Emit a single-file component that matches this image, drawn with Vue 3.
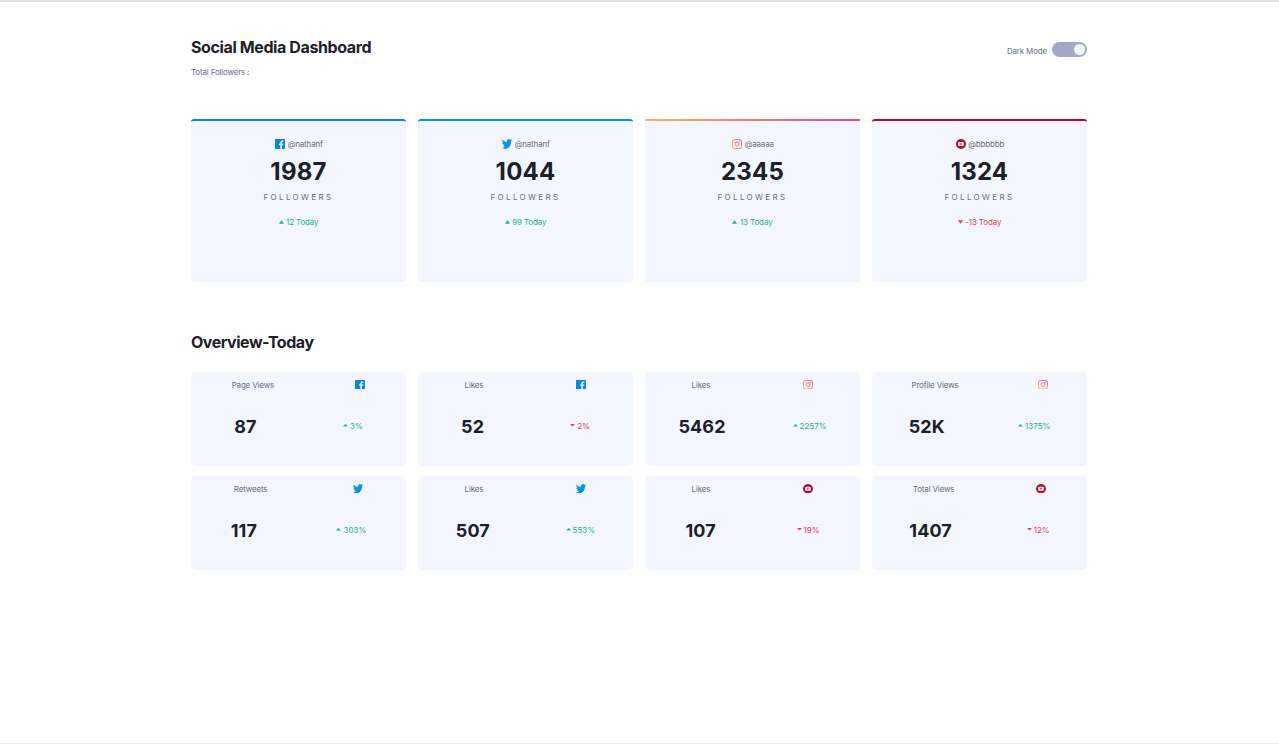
<script setup>
const followers = [
  { net: 'facebook', handle: '@nathanf', count: '1987', up: true, delta: '12 Today' },
  { net: 'twitter', handle: '@nathanf', count: '1044', up: true, delta: '99 Today' },
  { net: 'instagram', handle: '@aaaaa', count: '2345', up: true, delta: '13 Today' },
  { net: 'youtube', handle: '@bbbbbb', count: '1324', up: false, delta: '-13 Today' },
]
const overview = [
  { label: 'Page Views', net: 'facebook', value: '87', up: true, pct: '3%' },
  { label: 'Likes', net: 'facebook', value: '52', up: false, pct: '2%' },
  { label: 'Likes', net: 'instagram', value: '5462', up: true, pct: '2257%' },
  { label: 'Profile Views', net: 'instagram', value: '52K', up: true, pct: '1375%' },
  { label: 'Retweets', net: 'twitter', value: '117', up: true, pct: '303%' },
  { label: 'Likes', net: 'twitter', value: '507', up: true, pct: '553%' },
  { label: 'Likes', net: 'youtube', value: '107', up: false, pct: '19%' },
  { label: 'Total Views', net: 'youtube', value: '1407', up: false, pct: '12%' },
]
</script>

<template>
  <div class="page">
    <svg class="defs" width="0" height="0" aria-hidden="true">
      <defs>
        <linearGradient id="ig" x1="0" y1="1" x2="1" y2="0">
          <stop offset="0" stop-color="#fdb768" />
          <stop offset="0.5" stop-color="#f2756e" />
          <stop offset="1" stop-color="#df4996" />
        </linearGradient>
        <symbol id="facebook" viewBox="0 0 20 20" preserveAspectRatio="none">
          <path fill="#0388f0" d="M18.896 0H1.104C.494 0 0 .494 0 1.104v17.793C0 19.506.494 20 1.104 20h9.58v-7.745H8.076V9.237h2.606V7.01c0-2.583 1.578-3.99 3.883-3.99 1.104 0 2.052.082 2.329.119v2.7h-1.598c-1.254 0-1.496.597-1.496 1.47v1.928h2.989l-.39 3.018h-2.6V20h5.098c.608 0 1.102-.494 1.102-1.104V1.104C20 .494 19.506 0 18.896 0z" />
        </symbol>
        <symbol id="twitter" viewBox="0 2 24 20" preserveAspectRatio="none">
          <path fill="#0096ee" d="M23.953 4.57a10 10 0 01-2.825.775 4.958 4.958 0 002.163-2.723c-.951.555-2.005.959-3.127 1.184a4.92 4.92 0 00-8.384 4.482C7.69 8.095 4.067 6.13 1.64 3.162a4.822 4.822 0 00-.666 2.475c0 1.71.87 3.213 2.188 4.096a4.904 4.904 0 01-2.228-.616v.06a4.923 4.923 0 003.946 4.827 4.996 4.996 0 01-2.212.085 4.936 4.936 0 004.604 3.417 9.867 9.867 0 01-6.102 2.105c-.39 0-.779-.023-1.17-.067a13.995 13.995 0 007.557 2.209c9.053 0 13.998-7.496 13.998-13.985 0-.21 0-.42-.015-.63A9.935 9.935 0 0024 4.59z" />
        </symbol>
        <symbol id="instagram" viewBox="0 0 20 20" preserveAspectRatio="none">
          <rect x="0.9" y="0.9" width="18.2" height="18.2" rx="5" fill="none" stroke="url(#ig)" stroke-width="1.8" />
          <circle cx="10" cy="10" r="4.2" fill="none" stroke="url(#ig)" stroke-width="2" />
          <circle cx="15.3" cy="4.7" r="1.2" fill="#e2528f" />
        </symbol>
        <symbol id="youtube" viewBox="0 0 20 20" preserveAspectRatio="none">
          <circle cx="10" cy="10" r="10" fill="#c4032a" />
          <rect x="4.3" y="5.8" width="11.4" height="8.4" rx="2" fill="#f3f6ff" />
          <path fill="#c4032a" d="M8.6 7.8v4.4l3.8-2.2z" />
        </symbol>
      </defs>
    </svg>

    <main class="content">
      <header class="header">
        <div>
          <h1 class="title">Social Media Dashboard</h1>
          <p class="total">Total Followers :</p>
        </div>
        <div class="mode">
          <span class="mode-label">Dark Mode</span>
          <span class="switch"><span class="knob"></span></span>
        </div>
      </header>

      <section class="cards">
        <article v-for="f in followers" :key="f.net" class="card" :class="f.net">
          <div class="account">
            <svg class="icon"><use :href="'#' + f.net" /></svg>
            <span>{{ f.handle }}</span>
          </div>
          <div class="count">{{ f.count }}</div>
          <div class="caption">FOLLOWERS</div>
          <div class="delta" :class="{ down: !f.up }">
            <svg class="arrow" viewBox="0 0 6 4"><path d="M0 4L3 0L6 4z" /></svg>
            <span>{{ f.delta }}</span>
          </div>
        </article>
      </section>

      <h2 class="title overview-title">Overview-Today</h2>

      <section class="tiles">
        <article v-for="(o, i) in overview" :key="i" class="tile">
          <div class="row head">
            <span class="label">{{ o.label }}</span>
            <svg class="icon"><use :href="'#' + o.net" /></svg>
          </div>
          <div class="row">
            <span class="value">{{ o.value }}</span>
            <span class="pct" :class="{ down: !o.up }">
              <svg class="arrow" viewBox="0 0 6 3" preserveAspectRatio="none"><path d="M0 3L3 0L6 3z" /></svg>
              <span>{{ o.pct }}</span>
            </span>
          </div>
        </article>
      </section>
    </main>
  </div>
</template>

<style>
body {
  background: #fff;
}
</style>

<style scoped>
.page {
  box-sizing: border-box;
  height: 744px;
  border-top: 2px solid #e2e2e2;
  border-bottom: 1px solid #ececec;
  font-family: Inter, "Liberation Sans", sans-serif;
  font-size: 8px;
  line-height: 10px;
  letter-spacing: -0.17px;
  color: #696e84;
}
.defs {
  position: absolute;
}
.content {
  width: 896px;
  margin-left: 191px;
  padding-top: 35px;
}
.header {
  display: flex;
  justify-content: space-between;
  height: 82px;
}
.title {
  margin: 0;
  font-size: 16px;
  line-height: 20px;
  font-weight: 700;
  letter-spacing: -0.39px;
  color: #1d2029;
}
.total {
  margin: 10px 0 0;
}
.mode {
  display: flex;
  align-items: center;
  gap: 5px;
  height: 15px;
  margin-top: 5px;
}
.mode-label {
  padding-top: 2px;
}
.switch {
  box-sizing: border-box;
  display: flex;
  justify-content: flex-end;
  width: 35px;
  height: 15px;
  padding: 2px;
  border-radius: 8px;
  background: #a3a9c5;
}
.knob {
  width: 11px;
  height: 11px;
  border-radius: 50%;
  background: #f3f6ff;
}
.cards,
.tiles {
  display: grid;
  grid-template-columns: repeat(4, 215px);
  column-gap: 12px;
}
.card {
  box-sizing: border-box;
  display: flex;
  flex-direction: column;
  align-items: center;
  height: 163px;
  padding-top: 18px;
  border-top: 2px solid;
  border-radius: 3px;
  background: #f3f6ff;
}
.card.facebook {
  border-top-color: #0388f0;
}
.card.twitter {
  border-top-color: #0096ee;
}
.card.instagram {
  border-image: linear-gradient(90deg, #fdb768, #f2756e 55%, #df4996) 2;
  border-style: solid;
  border-width: 2px 0 0;
}
.card.youtube {
  border-top-color: #c4032a;
}
.icon {
  display: block;
  width: 10px;
  height: 10px;
}
.account {
  display: flex;
  align-items: center;
  gap: 2.5px;
}
.account .icon {
  margin-left: 1px;
}
.count {
  margin-top: 8px;
  font-size: 24px;
  line-height: 30px;
  font-weight: 700;
  letter-spacing: 0.2px;
  color: #1d2029;
}
.caption {
  margin-top: 5px;
  letter-spacing: 2.35px;
}
.delta,
.pct {
  display: flex;
  align-items: center;
  gap: 3px;
  color: #1db489;
}
.delta {
  margin-top: 15px;
  gap: 2.5px;
  letter-spacing: -0.13px;
}
.pct {
  gap: 2px;
  letter-spacing: 0;
}
.delta.down,
.pct.down {
  color: #dc414c;
}
.arrow {
  width: 5px;
  height: 4px;
  fill: currentColor;
}
.pct .arrow {
  width: 5px;
  height: 2.5px;
  margin-bottom: 1px;
}
.down .arrow {
  transform: rotate(180deg);
}
.overview-title {
  margin-top: 50px;
  letter-spacing: -0.46px;
}
.tiles {
  margin-top: 20px;
  row-gap: 10px;
}
.tile {
  height: 94px;
  border-radius: 5px;
  background: #f3f6ff;
}
.row {
  display: flex;
  align-items: center;
  justify-content: space-around;
}
.head {
  height: 25px;
}
.head .icon {
  height: 9.5px;
}
.value {
  padding-top: 1px;
  font-size: 18px;
  line-height: 22px;
  font-weight: 700;
  letter-spacing: 0.1px;
  color: #1d2029;
}
.pct {
  padding-bottom: 1px;
}
.head + .row {
  margin-top: 18px;
}
</style>
